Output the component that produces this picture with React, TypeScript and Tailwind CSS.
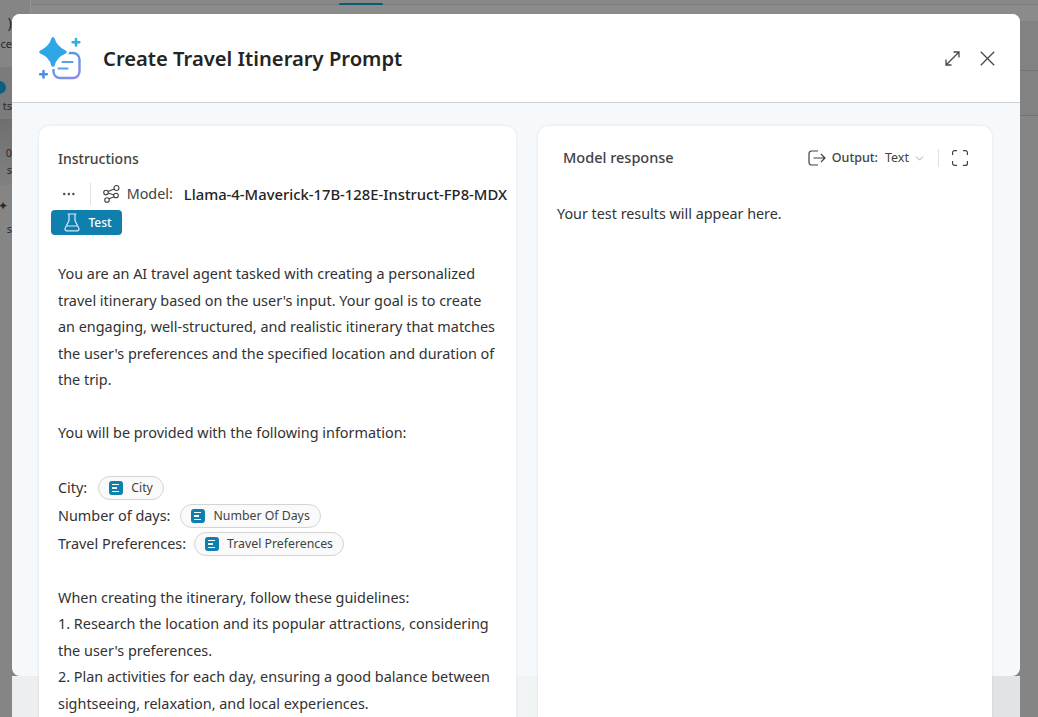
import React from "react";
import { Ellipsis, ChevronDown } from "lucide-react";

const font = "font-['Noto_Sans','Open_Sans',sans-serif]";

function Chip({ label }: { label: string }) {
  return (
    <span className="inline-flex h-[24px] items-center gap-[8px] rounded-full border border-[#d4d4d4] bg-[#fafafa] px-[10px] align-middle text-[12.3px] leading-none text-[#424242]">
      <span className="flex h-[14px] w-[14px] flex-col items-start justify-center gap-[2px] rounded-[3px] bg-[#0f7fae] pl-[3px]">
        <span className="h-[1.5px] w-[7px] bg-white" />
        <span className="h-[1.5px] w-[5px] bg-white" />
        <span className="h-[1.5px] w-[7px] bg-white" />
      </span>
      {label}
    </span>
  );
}

function Logo() {
  return (
    <svg width="44" height="44" viewBox="0 0 44 44" fill="none">
      <defs>
        <linearGradient id="lg" x1="18" y1="14" x2="38" y2="44" gradientUnits="userSpaceOnUse">
          <stop offset="0" stopColor="#3fa4e6" />
          <stop offset="1" stopColor="#8f86ee" />
        </linearGradient>
      </defs>
      <rect x="15.5" y="17" width="26" height="25" rx="6.500" stroke="url(#lg)" strokeWidth="2.400" />
      <path d="M24.500 26h10M20.500 32.500h9" stroke="#5a9fe8" strokeWidth="2.200" strokeLinecap="round" />
      <path
        d="M15 3C16.500 9 20 13 27 16 20 19 16.500 23 15 29 13.500 23 10 19 3 16 10 13 13.500 9 15 3z"
        fill="#2fa6e6"
        stroke="#ffffff"
        strokeWidth="8"
        strokeLinejoin="round"
      />
      <path
        d="M15 3C16.500 9 20 13 27 16 20 19 16.500 23 15 29 13.500 23 10 19 3 16 10 13 13.500 9 15 3z"
        fill="#2fa6e6"
        stroke="#2fa6e6"
        strokeWidth="3.500"
        strokeLinejoin="round"
      />
      <path d="M38 3v6.500M34.700 6.200h6.600" stroke="#2fb0dd" strokeWidth="2.600" strokeLinecap="round" />
      <path d="M5.500 35v6.500M2.200 38.200h6.600" stroke="#4a8fe6" strokeWidth="2.600" strokeLinecap="round" />
    </svg>
  );
}

function Expand() {
  return (
    <svg width="15" height="15" viewBox="0 0 15 15" fill="none" stroke="#484848" strokeWidth="1.300">
      <path d="M8.500 1h5.500v5.500M14 1L1 14M1 8.500V14h5.500" />
    </svg>
  );
}

function Close() {
  return (
    <svg width="15" height="15" viewBox="0 0 15 15" fill="none" stroke="#484848" strokeWidth="1.300">
      <path d="M.8 .8l13.400 13.400M14.200 .8L.8 14.200" />
    </svg>
  );
}

function Flask() {
  return (
    <svg width="16" height="19" viewBox="0 0 16 19" fill="none" stroke="#d5eef9" strokeWidth="1.200">
      <path d="M3.500 1h9M5 1v6.500L1.300 15a1.800 1.800 0 0 0 1.600 2.800h10.200a1.800 1.800 0 0 0 1.600-2.800L11 7.500V1M3 13h10" />
    </svg>
  );
}

function ModelIcon() {
  return (
    <svg width="17" height="18" viewBox="0 0 17 18" fill="none" stroke="#424242" strokeWidth="1.100">
      <circle cx="3" cy="7.500" r="2.300" />
      <circle cx="13.500" cy="3" r="2.500" />
      <circle cx="13" cy="10.500" r="2.300" />
      <circle cx="4" cy="15" r="2.300" />
      <path d="M5.100 6.600L11.200 4M5.200 8l5.600 1.900M5.900 13.700l5.300-2" />
    </svg>
  );
}

function OutputIcon() {
  return (
    <svg width="18" height="16" viewBox="0 0 18 16" fill="none" stroke="#424242" strokeWidth="1.200">
      <path d="M10 1H3.500A2.500 2.500 0 0 0 1 3.500v9A2.500 2.500 0 0 0 3.500 15H10" />
      <path d="M5.500 8h11.500M13 4l4 4-4 4" />
    </svg>
  );
}

function FullIcon() {
  return (
    <svg width="16" height="16" viewBox="0 0 16 16" fill="none" stroke="#424242" strokeWidth="1.200">
      <path d="M.6 5V2.600a2 2 0 0 1 2-2H5M11 .6h2.400a2 2 0 0 1 2 2V5M15.400 11v2.400a2 2 0 0 1-2 2H11M5 15.400H2.600a2 2 0 0 1-2-2V11" />
    </svg>
  );
}

export default function App() {
  return (
    <div className={`relative h-[717px] w-[1038px] overflow-hidden bg-[#868686] ${font}`}>
      {/* dimmed page behind the dialog */}
      <div className="flex h-full">
        <aside className="flex w-[30px] shrink-0 flex-col bg-[#858585] text-[11px] leading-[14px] text-[#2a2a2a]">
          <div className="h-[67px] w-[12px] overflow-hidden pt-[14px]">
            <div className="text-right text-[15px] leading-[16px]">)</div>
            <div className="mt-[7px] whitespace-nowrap text-right">ce</div>
          </div>
          <div className="flex h-[52px] w-full flex-col bg-[#7b7b7b]">
            <div className="mt-[14px] ml-[-7px] h-[13px] w-[13px] rounded-full bg-[#0b5f80]" />
            <div className="mt-[5px] w-[12px] text-right">ts</div>
          </div>
          <div className="h-[66px] w-[12px] overflow-hidden bg-[linear-gradient(#6f6f6f,#808080)] pt-[27px] text-right">
            <div>0</div>
            <div className="mt-[3px]">s</div>
          </div>
          <div className="w-[12px] overflow-hidden pt-[14px] text-right">
            <div className="ml-[-6px] h-[14px] w-[14px] text-[12px]">✦</div>
            <div className="mt-[9px]">s</div>
          </div>
        </aside>
        <main className="flex flex-1 flex-col border-l border-[#939393] bg-[#878787]">
          <div className="h-[5px] border-b border-[#7a7a7a]">
            <div className="ml-[308px] mt-[3px] h-[3px] w-[44px] rounded-full bg-[#0b5a73]" />
          </div>
          <div className="h-[16px] bg-[#8b8b8b]" />
          <div className="h-[50px] border-b border-[#727272] bg-[#828282]" />
          <div className="h-[45px] border-b border-[#727272] bg-[#828282]" />
          <div className="flex-1 bg-[#858585]" />
        </main>
      </div>

      {/* strip of the page below the dialog */}
      <div className="absolute bottom-0 left-[12px] h-[41px] w-[1008px] bg-[linear-gradient(90deg,#eceef0,#f2f5f6_50%,#e0e4e7_98%)]" />

      {/* dialog: its panels run on past the bottom edge */}
      <div className="absolute left-[12px] top-[14px] h-[662px] w-[1008px] rounded-[8px] bg-[#f5f9fb]">
        <header className="flex h-[89px] items-center justify-between rounded-t-[8px] border-b border-[#cfcfcf] bg-white pl-[26px] pr-[25px]">
          <div className="flex items-center gap-[21px]">
            <Logo />
            <h1 className="text-[20.2px] font-semibold leading-none text-[#242424]">Create Travel Itinerary Prompt</h1>
          </div>
          <div className="flex items-center gap-[20px]">
            <Expand />
            <Close />
          </div>
        </header>

        <div className="flex h-[620px] gap-[22px] pl-[27px] pt-[23px]">
          <section className="h-[620px] w-[477px] rounded-t-[10px] bg-white pl-[19px] pr-[9px] pt-[24px] shadow-[0_0_3px_rgba(0,0,0,0.1)]">
            <h2 className="text-[14px] font-medium leading-[18px] text-[#424242]">Instructions</h2>
            <div className="mt-[15px] flex h-[22px] items-center">
              <Ellipsis size={16} strokeWidth={1.6} color="#424242" className="ml-[3px]" />
              <span className="ml-[13px] h-[22px] w-px bg-[#e0e0e0]" />
              <span className="ml-[12px]"><ModelIcon /></span>
              <span className="ml-[7px] text-[14.35px] text-[#424242]">Model:</span>
              <span className="ml-[11px] whitespace-nowrap text-[14.8px] font-medium text-[#242424]">Llama-4-Maverick-17B-128E-Instruct-FP8-MDX</span>
            </div>
            <button className="-ml-[7px] mt-[5px] flex h-[25px] w-[71px] items-center justify-center gap-[8px] rounded-[4px] bg-[#0f7fae] pl-[3px] text-[12px] font-medium text-white">
              <Flask />
              Test
            </button>
            <div className="mt-[26px] text-[14.42px] leading-[26.5px] text-[#323232]">
              <p>You are an AI travel agent tasked with creating a personalized</p>
              <p>travel itinerary based on the user's input. Your goal is to create</p>
              <p>an engaging, well-structured, and realistic itinerary that matches</p>
              <p>the user's preferences and the specified location and duration of</p>
              <p>the trip.</p>
              <p className="mt-[26px]">You will be provided with the following information:</p>
              <p className="mt-[28px] flex h-[28px] items-center gap-[11px]">City: <Chip label="City" /></p>
              <p className="flex h-[28px] items-center gap-[10px]">Number of days: <Chip label="Number Of Days" /></p>
              <p className="flex h-[28px] items-center gap-[8px]">Travel Preferences: <Chip label="Travel Preferences" /></p>
              <p className="mt-[26.5px]">When creating the itinerary, follow these guidelines:</p>
              <p>1. Research the location and its popular attractions, considering</p>
              <p>the user's preferences.</p>
              <p>2. Plan activities for each day, ensuring a good balance between</p>
              <p>sightseeing, relaxation, and local experiences.</p>
            </div>
          </section>
          <section className="h-[620px] w-[454px] rounded-t-[10px] bg-white pt-[22px] shadow-[0_0_3px_rgba(0,0,0,0.1)]">
            <div className="flex h-[20px] items-center pl-[25px] pr-[24px]">
              <h2 className="flex-1 text-[14.5px] font-medium text-[#424242]">Model response</h2>
              <OutputIcon />
              <span className="ml-[6px] text-[12.5px] font-medium text-[#424242]">Output:</span>
              <span className="ml-[7px] text-[12.5px] text-[#424242]">Text</span>
              <ChevronDown size={13} strokeWidth={1.1} color="#707070" className="ml-[4px]" />
              <span className="ml-[12px] mr-[13px] h-[18px] w-px bg-[#e0e0e0]" />
              <FullIcon />
            </div>
            <p className="mt-[34px] pl-[19px] text-[14.35px] leading-[24px] text-[#323232]">Your test results will appear here.</p>
          </section>
        </div>
      </div>
    </div>
  );
}
